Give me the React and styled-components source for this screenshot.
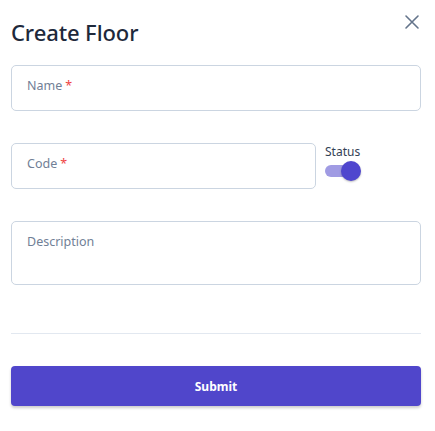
import React, { useState } from "react";
import styled, { createGlobalStyle } from "styled-components";

const GlobalStyle = createGlobalStyle`
  body {
    margin: 0;
    background: #ffffff;
    font-family: "Noto Sans", "Open Sans", sans-serif;
  }
`;

const Modal = styled.div`
  width: 435px;
  height: 431px;
  box-sizing: border-box;
  padding: 0 14px 0 11px;
  display: flex;
  flex-direction: column;
`;

const Header = styled.div`
  display: flex;
  justify-content: space-between;
  align-items: flex-start;
  height: 65px;
`;

const Title = styled.h2`
  margin: 17px 0 0;
  font-size: 22px;
  font-weight: 500;
  color: #1e293b;
  letter-spacing: -0.1px;
`;

const CloseButton = styled.button`
  border: none;
  background: none;
  padding: 0;
  margin: 14px 1px 0 0;
  color: #64748b;
  cursor: pointer;
  display: flex;
`;

const Field = styled.div`
  flex: ${(p) => (p.grow ? 1 : "none")};
  height: ${(p) => p.height}px;
  border: 1px solid #cbd5e1;
  border-radius: 5px;
  box-sizing: border-box;
  padding: 7px 15px;
`;

const Label = styled.span`
  font-size: 12.5px;
  color: #718096;
`;

const Required = styled.span`
  color: #ef4444;
  margin-left: 3px;
`;

const Row = styled.div`
  display: flex;
  gap: 9px;
  margin-top: ${(p) => p.top}px;
`;

const StatusBox = styled.div`
  display: flex;
  flex-direction: column;
  width: 96px;
  padding-top: 2px;
`;

const StatusLabel = styled.span`
  font-size: 12px;
  color: #334155;
  line-height: 14px;
`;

const Toggle = styled.button`
  position: relative;
  width: 36px;
  height: 20px;
  border: none;
  background: none;
  padding: 0;
  margin-top: 2px;
  cursor: pointer;
`;

const Track = styled.span`
  position: absolute;
  left: 0;
  top: 4px;
  width: 33px;
  height: 12px;
  border-radius: 6px;
  background: ${(p) => (p.on ? "#a09be3" : "#cbd5e1")};
`;

const Thumb = styled.span`
  position: absolute;
  top: 0;
  left: ${(p) => (p.on ? 16 : 0)}px;
  width: 20px;
  height: 20px;
  border-radius: 50%;
  background: ${(p) => (p.on ? "#4f46ce" : "#f8fafc")};
  box-shadow: 0 1px 2px rgba(0, 0, 0, 0.25);
`;

const Divider = styled.hr`
  border: none;
  border-top: 1px solid #e2e8f0;
  margin: 48px 0 0;
`;

const SubmitButton = styled.button`
  margin-top: 32px;
  height: 40px;
  border: none;
  border-radius: 4px;
  background: #5046cb;
  color: #ffffff;
  font-family: "Noto Sans", sans-serif;
  font-size: 12px;
  font-weight: 700;
  box-shadow: 0 2px 3px rgba(0, 0, 0, 0.2);
  cursor: pointer;
`;

export default function App() {
  const [status, setStatus] = useState(true);
  return (
    <>
      <GlobalStyle />
      <Modal>
        <Header>
          <Title>Create Floor</Title>
          <CloseButton aria-label="Close">
            <svg width="16" height="16" viewBox="0 0 16 16" fill="none" stroke="currentColor" strokeWidth="1.6" strokeLinecap="round">
              <path d="M2 2L14 14M14 2L2 14" />
            </svg>
          </CloseButton>
        </Header>
        <Field height={46}>
          <Label>
            Name<Required>*</Required>
          </Label>
        </Field>
        <Row top={32}>
          <Field grow height={46}>
            <Label>
              Code<Required>*</Required>
            </Label>
          </Field>
          <StatusBox>
            <StatusLabel>Status</StatusLabel>
            <Toggle onClick={() => setStatus(!status)} aria-label="Status">
              <Track on={status} />
              <Thumb on={status} />
            </Toggle>
          </StatusBox>
        </Row>
        <Row top={32}>
          <Field grow height={64}>
            <Label>Description</Label>
          </Field>
        </Row>
        <Divider />
        <SubmitButton>Submit</SubmitButton>
      </Modal>
    </>
  );
}
